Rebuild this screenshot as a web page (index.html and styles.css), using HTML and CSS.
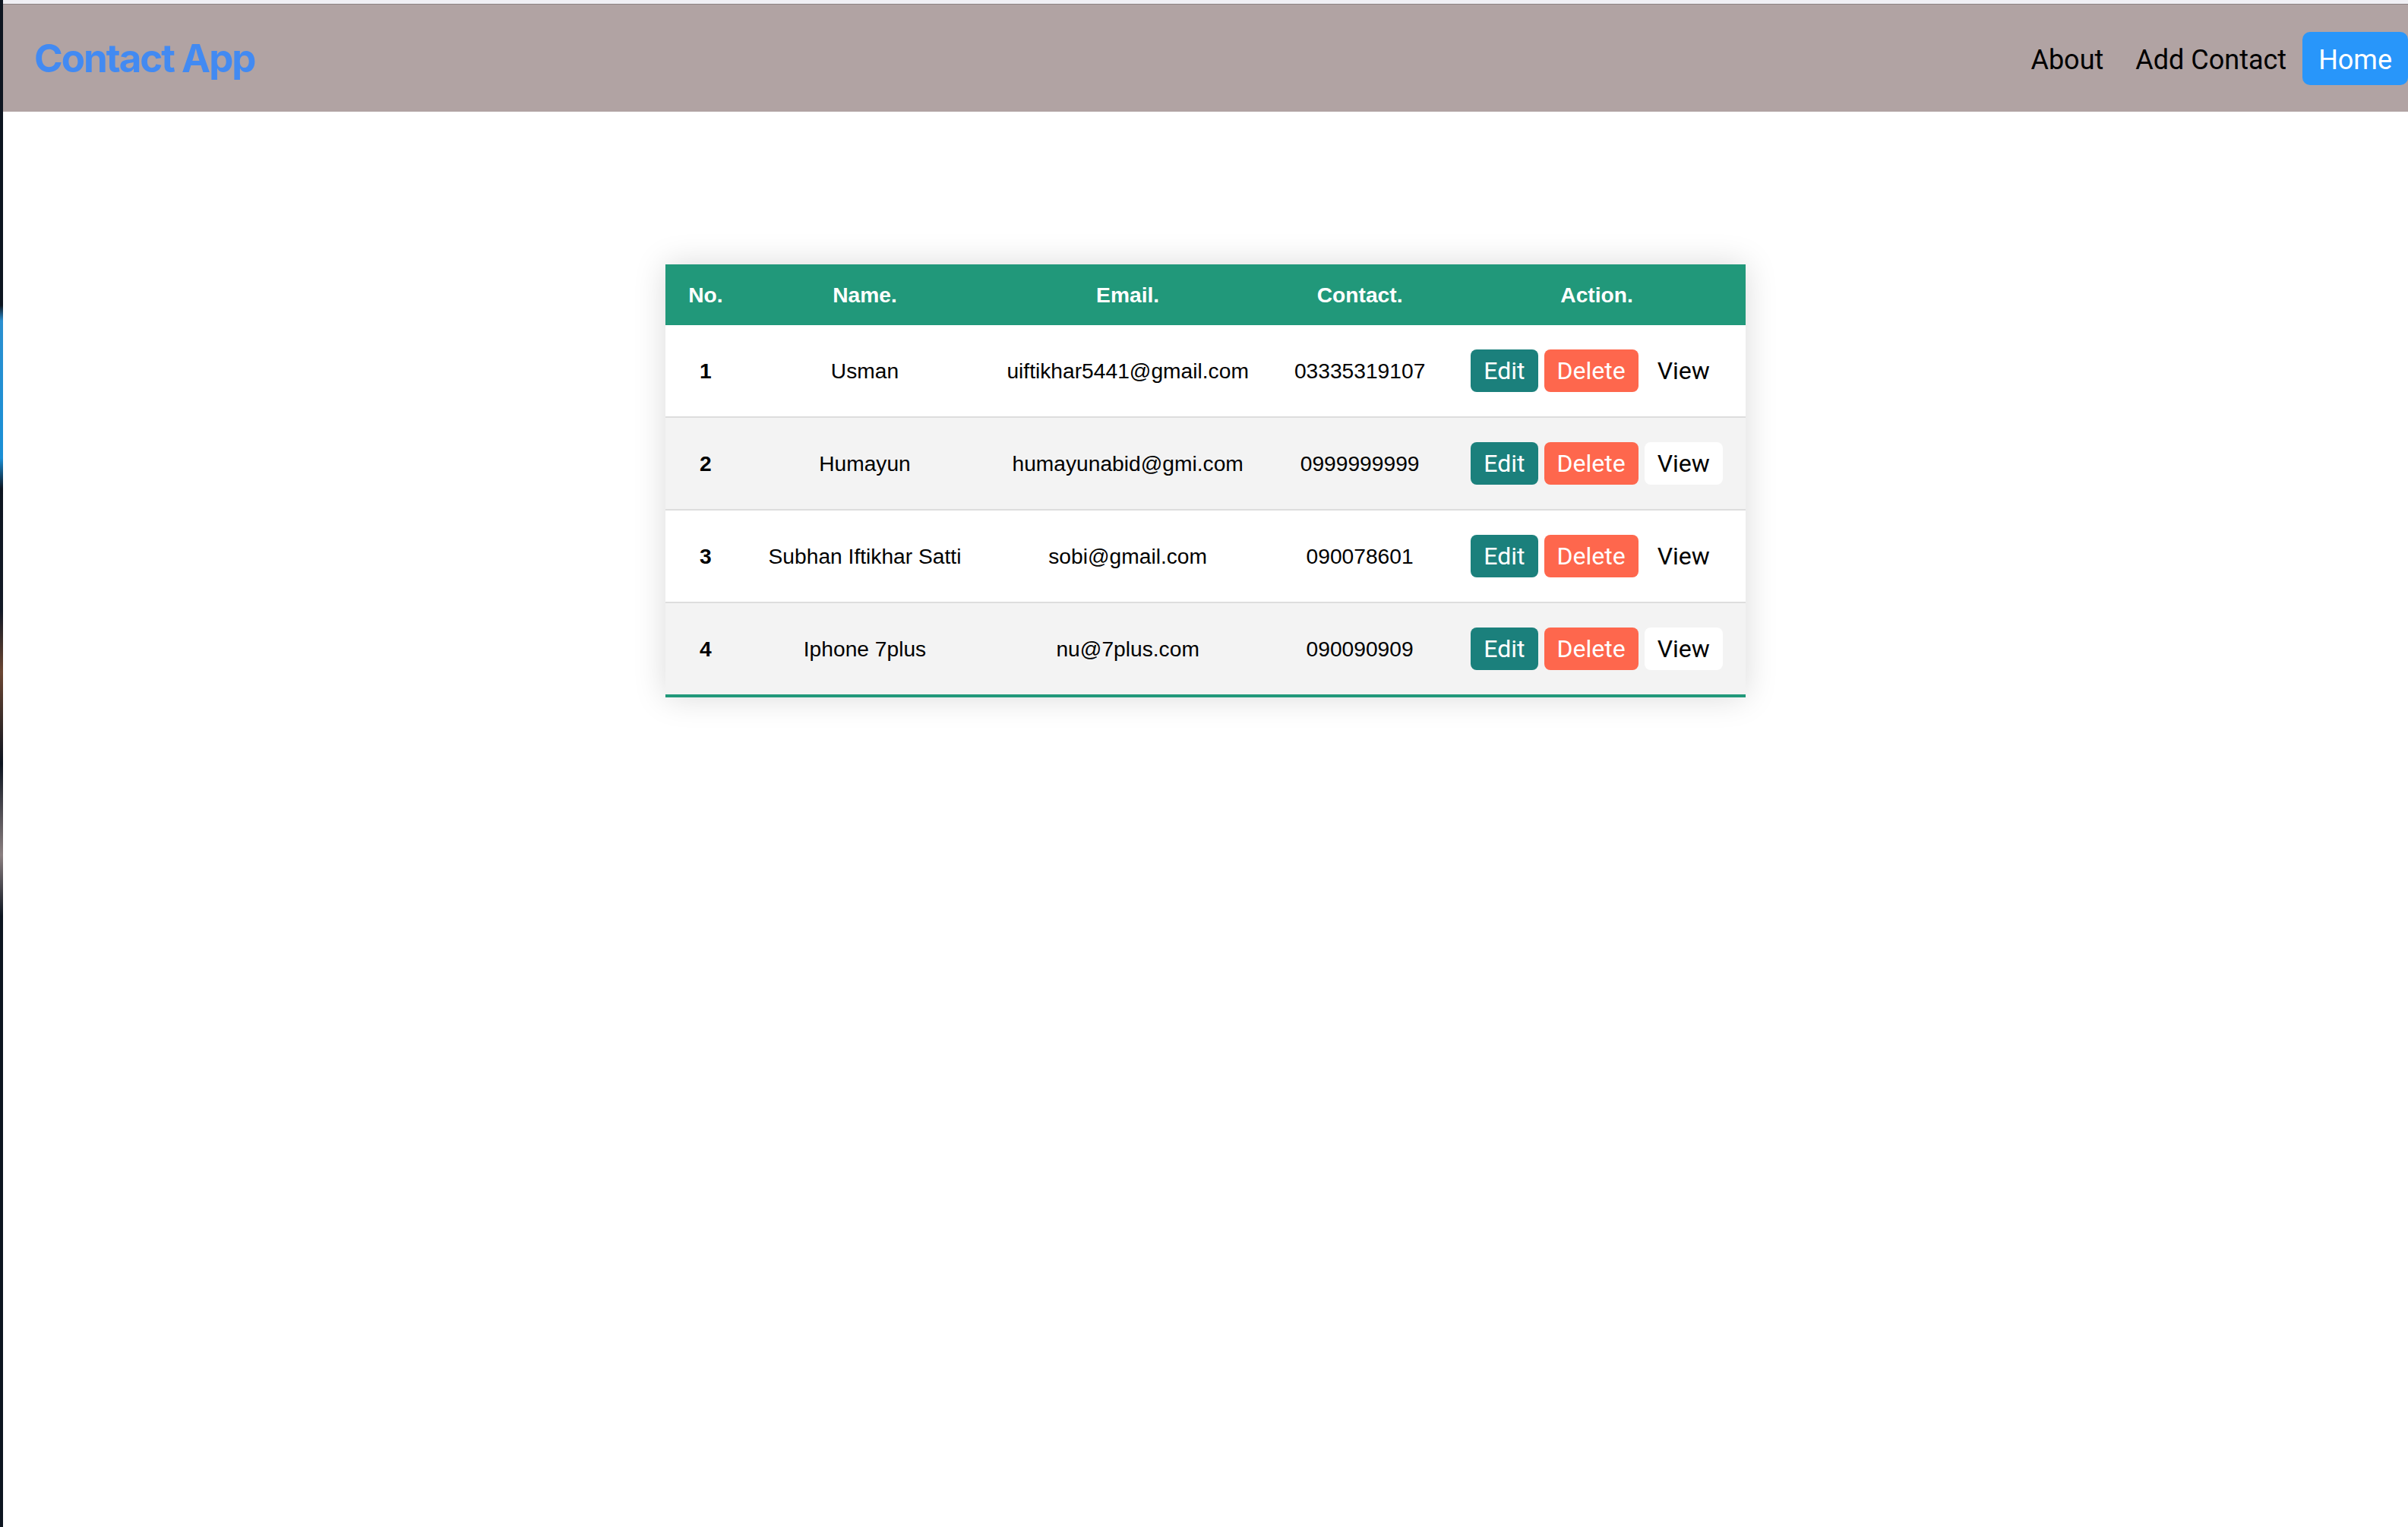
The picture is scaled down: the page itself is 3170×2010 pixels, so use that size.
FILE: index.html
```html
<!DOCTYPE html>
<html lang="en">
<head>
<meta charset="utf-8">
<title>Contact App</title>
<link rel="stylesheet" href="styles.css">
</head>
<body>
<div class="screen">
  <div class="edge"></div>
  <div class="window">
    <div class="chrome"></div>
    <nav class="navbar">
      <a class="brand" href="#">Contact App</a>
      <ul class="links">
        <li><a href="#">About</a></li>
        <li><a href="#">Add Contact</a></li>
        <li><a href="#" class="active">Home</a></li>
      </ul>
    </nav>
    <main class="content">
      <table class="contacts">
        <thead>
          <tr>
            <th>No.</th>
            <th>Name.</th>
            <th>Email.</th>
            <th>Contact.</th>
            <th>Action.</th>
          </tr>
        </thead>
        <tbody>
          <tr>
            <td class="num">1</td>
            <td>Usman</td>
            <td>uiftikhar5441@gmail.com</td>
            <td>03335319107</td>
            <td><div class="actions"><button class="btn edit">Edit</button><button class="btn delete">Delete</button><button class="btn view">View</button></div></td>
          </tr>
          <tr>
            <td class="num">2</td>
            <td>Humayun</td>
            <td>humayunabid@gmi.com</td>
            <td>0999999999</td>
            <td><div class="actions"><button class="btn edit">Edit</button><button class="btn delete">Delete</button><button class="btn view">View</button></div></td>
          </tr>
          <tr>
            <td class="num">3</td>
            <td>Subhan Iftikhar Satti</td>
            <td>sobi@gmail.com</td>
            <td>090078601</td>
            <td><div class="actions"><button class="btn edit">Edit</button><button class="btn delete">Delete</button><button class="btn view">View</button></div></td>
          </tr>
          <tr>
            <td class="num">4</td>
            <td>Iphone 7plus</td>
            <td>nu@7plus.com</td>
            <td>090090909</td>
            <td><div class="actions"><button class="btn edit">Edit</button><button class="btn delete">Delete</button><button class="btn view">View</button></div></td>
          </tr>
        </tbody>
      </table>
    </main>
  </div>
</div>
</body>
</html>
```

FILE: styles.css
```css
html, body {
  margin: 0;
  padding: 0;
  height: 100%;
  overflow: hidden;
  background: #ffffff;
}

.screen {
  display: flex;
  height: 2010px;
}

.edge {
  flex: none;
  width: 4px;
  background: linear-gradient(#0d1520 0%, #0d1520 20%, #2a8fd0 21%, #1a8fd6 30%, #0d1520 32%, #131a26 40%, #6b4632 44%, #0d1520 50%, #8a7f80 56%, #0d1520 60%, #0d1520 100%);
}

.window {
  flex: 1;
  min-width: 0;
  display: flex;
  flex-direction: column;
  background: #ffffff;
}

.chrome {
  height: 5px;
  background: #f0eff4;
  border-bottom: 1px solid #8c8283;
}

.navbar {
  height: 141px;
  background: #b1a3a3;
  display: flex;
  align-items: center;
  justify-content: space-between;
  padding-left: 41px;
}

.brand {
  font-family: Inter, "Noto Sans", sans-serif;
  font-weight: 700;
  font-size: 51px;
  letter-spacing: -2px;
  line-height: 1;
  color: #428af2;
  text-decoration: none;
}

.links {
  display: flex;
  align-items: center;
  list-style: none;
  margin: 0;
  padding: 0;
}

.links a {
  display: block;
  font-family: Roboto, "Liberation Sans", sans-serif;
  font-size: 36px;
  line-height: 70px;
  padding: 2px 21px 0;
  height: 68px;
  border-radius: 10px;
  color: #000000;
  text-decoration: none;
}

.links a.active {
  background: #2896fa;
  color: #ffffff;
}

.content {
  display: flex;
  justify-content: center;
  padding-top: 201px;
}

.contacts {
  border-collapse: collapse;
  font-family: "Liberation Sans", Arial, sans-serif;
  font-size: 28.2px;
  color: #000000;
  box-shadow: 0 0 40px rgba(0, 0, 0, 0.15);
}

.contacts thead tr {
  background: #21987a;
  color: #ffffff;
}

.contacts th {
  padding: 24px 30px;
  line-height: 32px;
  font-weight: 700;
  text-align: center;
}

.contacts td {
  padding: 32px 30px;
  text-align: center;
  white-space: nowrap;
}

.contacts tbody tr {
  border-bottom: 2px solid #dddddd;
}

.contacts tbody tr:nth-child(even) {
  background: #f3f3f3;
}

.contacts tbody tr:last-child {
  border-bottom: 4px solid #21987a;
}

.contacts td.num {
  font-weight: 700;
}

.actions {
  display: flex;
  justify-content: center;
  gap: 8px;
}

.btn {
  height: 56px;
  line-height: 56px;
  padding: 0 17px;
  border: none;
  border-radius: 8px;
  font-family: Roboto, "Liberation Sans", sans-serif;
  font-size: 32px;
  cursor: pointer;
}

.btn.edit {
  background: #1b807c;
  color: #ffffff;
}

.btn.delete {
  background: #fe674d;
  color: #ffffff;
}

.btn.view {
  background: #ffffff;
  color: #000000;
}
```
